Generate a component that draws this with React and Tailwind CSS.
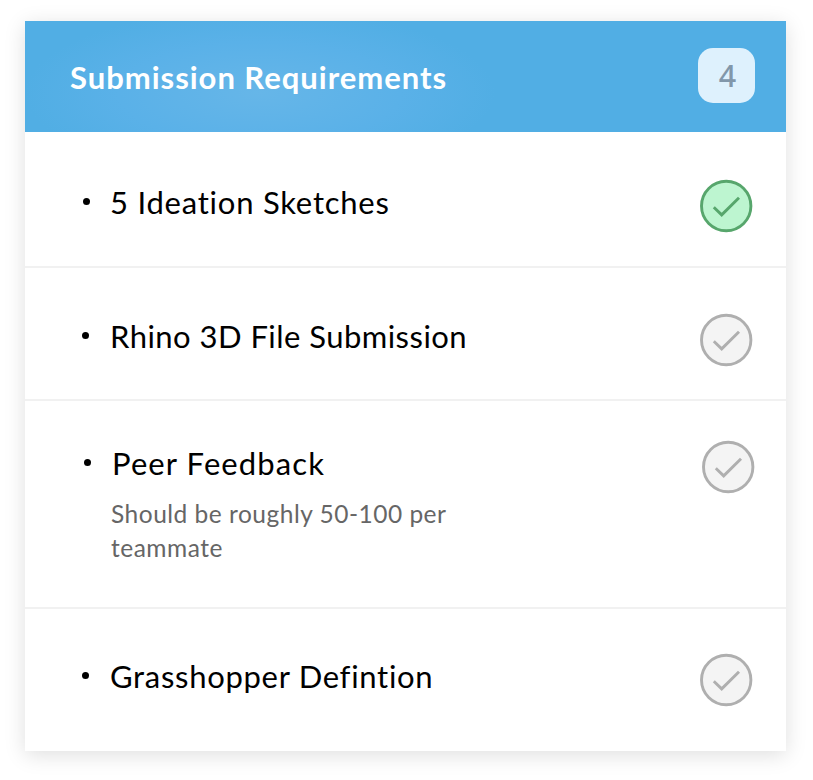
import React from "react";
import clsx from "clsx";

const requirements = [
  {
    title: "5 Ideation Sketches",
    done: true,
    row: "h-[136px] pt-[47px] pr-[34px] pl-[58px] border-b-2",
    text: "tracking-[0.77px] -ml-px",
  },
  {
    title: "Rhino 3D File Submission",
    done: false,
    row: "h-[133px] pt-[45px] pr-[34px] pl-[57px] border-b-2",
    text: "tracking-[0.46px]",
  },
  {
    title: "Peer Feedback",
    note: "Should be roughly 50-100 per teammate",
    done: false,
    row: "h-[208px] pt-[39px] pr-[32px] pl-[59px] border-b-2",
    text: "tracking-[1.1px]",
  },
  {
    title: "Grasshopper Defintion",
    done: false,
    row: "h-[142px] pt-[44px] pr-[34px] pl-[57px]",
    text: "tracking-[0.7px]",
  },
];

// Round check mark on the right of each row
const StatusIcon = ({ done }) => (
  <svg
    viewBox="0 0 54 54"
    className={clsx(
      "h-[54px] w-[54px] shrink-0 -mr-px",
      done ? "fill-[#bdf5d0] stroke-[#57a66c]" : "fill-[#f4f4f4] stroke-[#afafaf]"
    )}
  >
    <circle cx="27.2" cy="27" r="24.7" strokeWidth="2.9" />
    <path d="M14.8 28.3L22.7 35.9L40 18.8" fill="none" strokeWidth="2.9" />
  </svg>
);

const RequirementRow = ({ item }) => (
  <li className={clsx("flex items-start border-[#f1f1f1]", item.row)}>
    <span className="mt-[19px] h-[7px] w-[7px] shrink-0 rounded-full bg-black" />
    <div className="ml-[21px] grow">
      <h3 className={clsx("-mt-px whitespace-nowrap text-[31px] leading-[48px] text-black", item.text)}>
        {item.title}
      </h3>
      {item.note && (
        <p className="mt-[10px] -ml-[1px] w-[360px] text-[24.5px] leading-[34px] tracking-[0.5px] text-[#666666]">
          {item.note}
        </p>
      )}
    </div>
    <StatusIcon done={item.done} />
  </li>
);

const App = () => {
  const remaining = 4;

  return (
    <div className="h-[780px] w-[813px] overflow-hidden bg-white pt-[21px] pl-[25px] font-['Lato',sans-serif]">
      <div className="h-[730px] w-[761px] bg-white shadow-[0_4px_20px_rgba(0,0,0,0.13)]">
        <div className="flex h-[111px] items-start justify-between bg-[#51aee4] bg-[radial-gradient(ellipse_235px_85px_at_235px_72px,#66b6e8_0%,#5ab1e8_60%,#51aee4_100%)] pr-[31px] pl-[45px]">
          <h2 className="mt-[32px] whitespace-nowrap text-[31px] leading-[48px] font-bold tracking-[0.98px] text-white">
            Submission Requirements
          </h2>
          <span className="mt-[27px] flex h-[55px] w-[57px] items-center justify-center rounded-[15px] bg-[#def1fd] pl-[2px] font-['Noto_Sans',sans-serif] text-[30.5px] leading-none font-medium text-[#8197aa]">
            {remaining}
          </span>
        </div>

        <ul>
          {requirements.map((item) => (
            <RequirementRow key={item.title} item={item} />
          ))}
        </ul>
      </div>
    </div>
  );
};

export default App;
